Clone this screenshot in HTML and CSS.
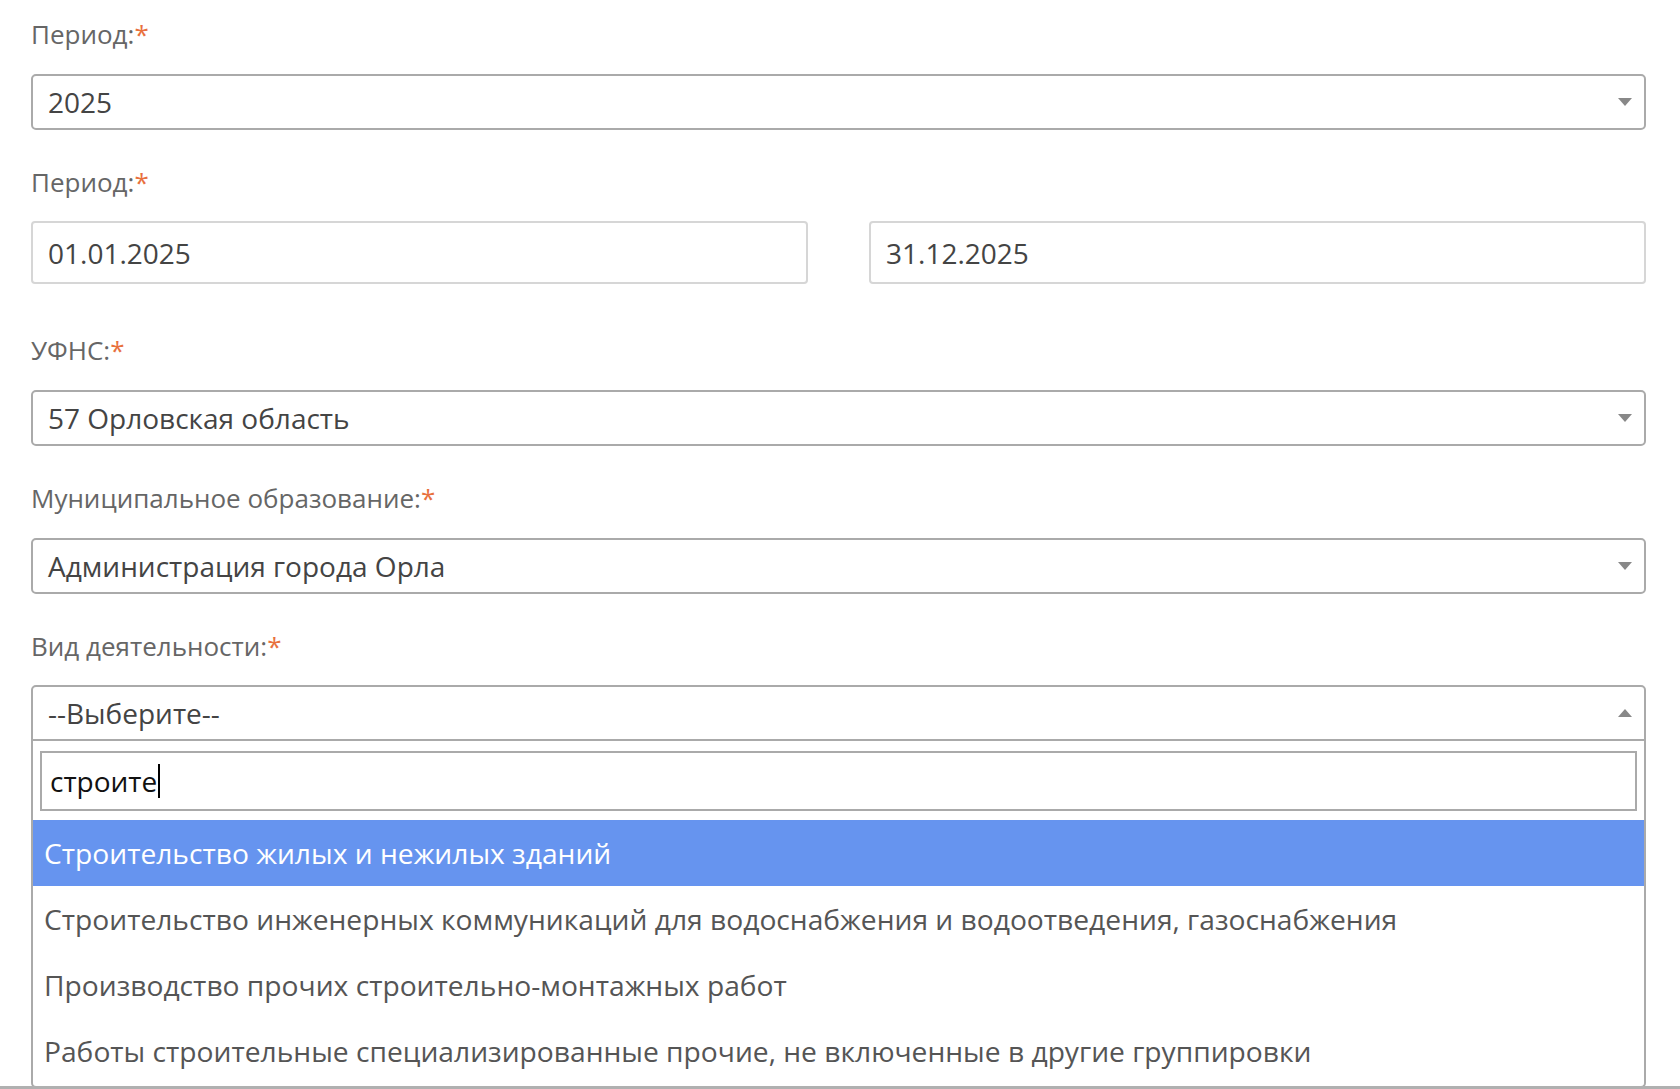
FILE: index.html
```html
<!DOCTYPE html>
<html lang="ru">
<head>
    <meta charset="UTF-8">
    <meta name="viewport" content="width=device-width, initial-scale=1.0">
    <title>Период</title>
    <link rel="stylesheet" href="styles.css">
</head>
<body>
    <div class="container">
        <form class="form">
            <div class="field">
                <label class="field-label">Период:<span class="req">*</span></label>
                <div class="select">
                    <span class="select-value">2025</span>
                    <span class="arrow"></span>
                </div>
            </div>
            <div class="field field-dates">
                <label class="field-label">Период:<span class="req">*</span></label>
                <div class="dates">
                    <div class="text-input">01.01.2025</div>
                    <div class="text-input">31.12.2025</div>
                </div>
            </div>
            <div class="field">
                <label class="field-label">УФНС:<span class="req">*</span></label>
                <div class="select">
                    <span class="select-value">57 Орловская область</span>
                    <span class="arrow"></span>
                </div>
            </div>
            <div class="field">
                <label class="field-label">Муниципальное образование:<span class="req">*</span></label>
                <div class="select">
                    <span class="select-value">Администрация города Орла</span>
                    <span class="arrow"></span>
                </div>
            </div>
            <div class="field field-open">
                <label class="field-label">Вид деятельности:<span class="req">*</span></label>
                <div class="select select-open">
                    <span class="select-value">--Выберите--</span>
                    <span class="arrow arrow-up"></span>
                </div>
                <div class="dropdown">
                    <div class="search-wrap">
                        <div class="search">строите<span class="caret"></span></div>
                    </div>
                    <ul class="options">
                        <li class="option highlighted">Строительство жилых и нежилых зданий</li>
                        <li class="option">Строительство инженерных коммуникаций для водоснабжения и водоотведения, газоснабжения</li>
                        <li class="option">Производство прочих строительно-монтажных работ</li>
                        <li class="option">Работы строительные специализированные прочие, не включенные в другие группировки</li>
                    </ul>
                </div>
            </div>
        </form>
    </div>
    <div class="bottom-edge"></div>
</body>
</html>
```
FILE: styles.css
```css
html, body {
    height: 100%;
}
body {
    margin: 0;
    font-family: "Open Sans", "Noto Sans", sans-serif;
    background-color: #fff;
    color: #333;
    overflow: hidden;
    position: relative;
}
.container {
    width: 1615px;
    padding: 16px 0 0 31px;
}
.field {
    margin-bottom: 34px;
}
.field-dates {
    margin-bottom: 48px;
}
.field-dates .field-label {
    margin-bottom: 21px;
}
.field-open {
    margin-bottom: 0;
}
.field-open .field-label {
    margin-bottom: 21px;
}
.field-label {
    display: block;
    font-size: 26px;
    line-height: 36px;
    color: #666;
    margin-bottom: 22px;
}
.req {
    color: #e8703d;
}
.select {
    display: flex;
    align-items: center;
    justify-content: space-between;
    box-sizing: border-box;
    height: 56px;
    padding: 0 12px 0 15px;
    border: 2px solid #aaa;
    border-radius: 5px;
    font-size: 28px;
    color: #444;
}
.select-open {
    border-bottom-left-radius: 0;
    border-bottom-right-radius: 0;
}
.arrow {
    width: 0;
    height: 0;
    border-left: 7px solid transparent;
    border-right: 7px solid transparent;
    border-top: 8px solid #888;
}
.arrow-up {
    border-top: none;
    border-bottom: 8px solid #888;
}
.dates {
    display: flex;
    gap: 61px;
}
.text-input {
    flex: 1;
    box-sizing: border-box;
    height: 63px;
    display: flex;
    align-items: center;
    padding: 0 15px;
    border: 2px solid #d6d6d6;
    border-radius: 4px;
    font-size: 28px;
    color: #444;
}
.dropdown {
    box-sizing: border-box;
    border: 2px solid #aaa;
    border-top: none;
    border-bottom-left-radius: 5px;
    border-bottom-right-radius: 5px;
    height: 347px;
    overflow: hidden;
}
.search-wrap {
    padding: 10px 7px 9px 7px;
}
.search {
    box-sizing: border-box;
    height: 60px;
    border: 2px solid #aaa;
    display: flex;
    align-items: center;
    padding: 0 8px;
    font-size: 28px;
    color: #111;
}
.caret {
    display: inline-block;
    width: 2px;
    height: 34px;
    background-color: #000;
    margin-left: 1px;
}
.options {
    list-style: none;
    margin: 0;
    padding: 0;
}
.option {
    height: 66px;
    display: flex;
    align-items: center;
    padding: 0 11px;
    font-size: 28.2px;
    color: #555;
}
.highlighted {
    background-color: #6694ef;
    color: #fff;
}
.bottom-edge {
    position: absolute;
    left: 0;
    right: 0;
    bottom: 0;
    height: 3px;
    background-color: #b0b0b0;
}
```
